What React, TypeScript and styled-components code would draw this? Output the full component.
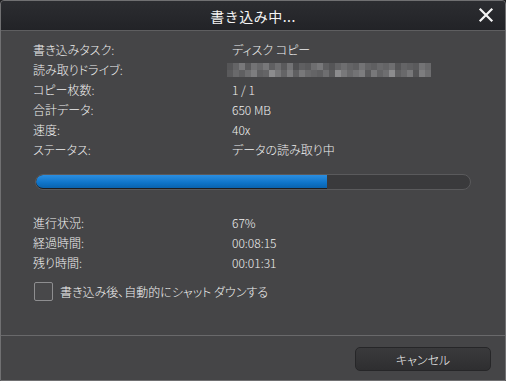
import React from "react";
import styled, { createGlobalStyle } from "styled-components";

const Global = createGlobalStyle`
  html, body { margin: 0; padding: 0; background: #1e1e20; }
  body {
    font-family: "Noto Sans CJK JP", "Noto Sans", sans-serif;
    font-feature-settings: "palt";
  }
`;

const Window = styled.div`
  width: 506px;
  height: 381px;
  box-sizing: border-box;
  background: #454547;
  border: 1px solid #707072;
  border-radius: 4px 4px 0 0;
  display: flex;
  flex-direction: column;
  overflow: hidden;
  color: #f2f2f2;
`;

const TitleBar = styled.div`
  height: 29px;
  flex: none;
  background: linear-gradient(#2c2d31, #222327);
  border-bottom: 1px solid #5e5e60;
  display: flex;
  align-items: center;
  justify-content: center;
  position: relative;
`;

const Title = styled.div`
  font-size: 14px;
  color: #f4f4f4;
  letter-spacing: 0.5px;
  font-feature-settings: normal;
`;

const Close = styled.button`
  position: absolute;
  right: 11px;
  top: 6px;
  width: 16px;
  height: 16px;
  padding: 0;
  background: none;
  border: none;
  display: flex;
`;

const Body = styled.div`
  flex: 1;
  padding: 9px 0 0 32px;
  display: flex;
  flex-direction: column;
`;

const InfoList = styled.div`
  display: flex;
  flex-direction: column;
`;

const Row = styled.div`
  display: grid;
  grid-template-columns: 199px 1fr;
  height: 20px;
  align-items: center;
  font-size: 12px;
  line-height: 20px;
`;

const Label = styled.span`
  color: #f0f0f0;
  font-weight: 300;
`;

const Value = styled.span`
  color: #f0f0f0;
  font-weight: 300;
  display: flex;
  align-items: center;
`;

const Mosaic = styled.div`
  display: flex;
  height: 14px;
  margin-left: -5px;
`;

const Cell = styled.div`
  width: 6px;
  display: flex;
  flex-direction: column;
`;

const Px = styled.div`
  flex: 1;
`;

const Track = styled.div`
  margin: 14px 0 0 2px;
  width: 436px;
  height: 16px;
  box-sizing: border-box;
  border-radius: 8px;
  background: #3a3a3c;
  border: 1px solid #5a5a5c;
  overflow: hidden;
  display: flex;
`;

const Fill = styled.div<{ $pct: number }>`
  width: ${(p) => p.$pct}%;
  height: 100%;
  background: linear-gradient(#2b8ee0, #0f74c8 60%, #0a62ad);
  border-radius: 8px 0 0 8px;
  border-bottom: 1px solid #1d1d1f;
  box-sizing: border-box;
`;

const Progress = styled(InfoList)`
  margin-top: 23px;
`;

const CheckRow = styled.label`
  display: flex;
  align-items: center;
  gap: 7px;
  margin-top: 9px;
  margin-left: 1px;
  font-size: 12px;
  font-weight: 300;
`;

const Box = styled.span`
  width: 19px;
  height: 19px;
  box-sizing: border-box;
  border: 1px solid #8e8e90;
  border-radius: 2px;
  background: #48484a;
`;

const Footer = styled.div`
  height: 45px;
  flex: none;
  border-top: 1px solid #69696b;
  display: flex;
  align-items: center;
  justify-content: flex-end;
  padding-right: 14px;
  padding-top: 2px;
  box-sizing: border-box;
`;

const Button = styled.button`
  width: 136px;
  height: 24px;
  border-radius: 5px;
  border: 1px solid #262628;
  background: linear-gradient(#3a3a3c, #2e2e30);
  color: #f4f4f4;
  font-family: "Noto Sans CJK JP", "Noto Sans", sans-serif;
  font-feature-settings: "palt";
  font-weight: 300;
  font-size: 12px;
  padding: 0;
`;

const mosaic: number[][] = [
  [85, 90], [100, 105], [120, 95], [90, 110], [115, 125], [105, 95], [120, 100], [95, 140],
  [110, 120], [90, 100], [115, 125], [80, 95], [95, 120], [90, 105], [110, 100], [120, 95],
  [95, 110], [85, 90], [100, 140], [110, 120], [100, 105], [95, 115], [115, 125], [100, 90],
  [95, 120], [105, 100], [100, 110], [110, 140], [85, 95], [100, 105], [95, 120], [90, 85],
  [115, 125], [105, 110],
];

const rows: [string, React.ReactNode][] = [
  ["書き込みタスク:", "ディスク コピー"],
  ["読み取りドライブ:", "__mosaic__"],
  ["コピー枚数:", "1 / 1"],
  ["合計データ:", "650 MB"],
  ["速度:", "40x"],
  ["ステータス:", "データの読み取り中"],
];

const progressRows: [string, string][] = [
  ["進行状況:", "67%"],
  ["経過時間:", "00:08:15"],
  ["残り時間:", "00:01:31"],
];

export default function App() {
  return (
    <>
      <Global />
      <Window>
        <TitleBar>
          <Title>書き込み中...</Title>
          <Close aria-label="閉じる">
            <svg width="16" height="16" viewBox="0 0 16 16">
              <path d="M2.5 2.5 L13.5 13.5 M13.5 2.5 L2.5 13.5" stroke="#f4f4f4" strokeWidth="2.2" strokeLinecap="square" />
            </svg>
          </Close>
        </TitleBar>
        <Body>
          <InfoList>
            {rows.map(([l, v]) => (
              <Row key={l}>
                <Label>{l}</Label>
                <Value>
                  {v === "__mosaic__" ? (
                    <Mosaic>
                      {mosaic.map((c, i) => (
                        <Cell key={i}>
                          {c.map((g, j) => (
                            <Px key={j} style={{ background: `rgb(${g},${g},${g + 2})` }} />
                          ))}
                        </Cell>
                      ))}
                    </Mosaic>
                  ) : (
                    v
                  )}
                </Value>
              </Row>
            ))}
          </InfoList>
          <Track>
            <Fill $pct={67} />
          </Track>
          <Progress>
            {progressRows.map(([l, v]) => (
              <Row key={l}>
                <Label>{l}</Label>
                <Value>{v}</Value>
              </Row>
            ))}
          </Progress>
          <CheckRow>
            <Box />
            書き込み後、自動的にシャット ダウンする
          </CheckRow>
        </Body>
        <Footer>
          <Button>キャンセル</Button>
        </Footer>
      </Window>
    </>
  );
}
